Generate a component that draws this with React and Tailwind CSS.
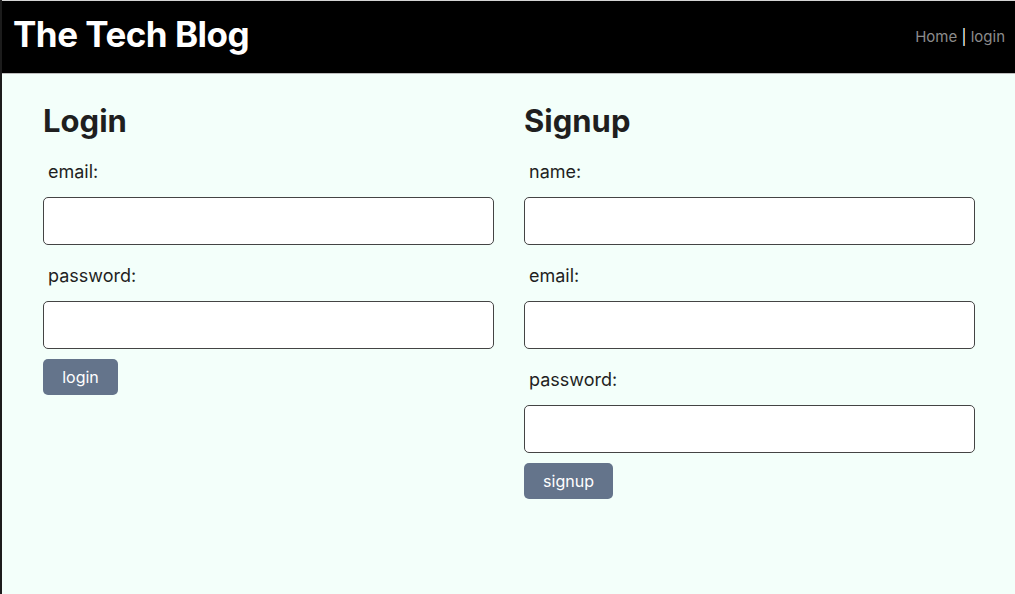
import React from 'react';

const font = { fontFamily: 'Inter, "Liberation Sans", sans-serif' };

const Field = ({ label, type = 'text' }) => (
  <div className="mt-[17px]">
    <label className="block pl-[5px] text-[18px] leading-[28px] text-[#1f1f1f]">{label}</label>
    <input
      type={type}
      className="mt-[11px] block h-[48px] w-full rounded-[5px] border border-[#444] bg-white px-2"
    />
  </div>
);

const App = () => {
  return (
    <div className="min-h-[594px] border-l-2 border-[#1c1c1c] bg-[#f3fffa]" style={font}>
      {/* Header */}
      <header className="flex h-[74px] items-center justify-between border-t border-b border-t-[#d4d4d4] border-b-[#bdbdbd] bg-black pl-[11px] pr-[10px]">
        <h1 className="pb-[5px] text-[35px] font-bold tracking-[-0.5px] text-white">The Tech Blog</h1>
        <nav className="text-[15px] text-[#8c8c8c]">
          <a href="#">Home</a>
          <span className="text-white"> | </span>
          <a href="#">login</a>
        </nav>
      </header>

      {/* Forms */}
      <main className="grid grid-cols-2 gap-[30px] pl-[41px] pr-[40px] pt-[27px]">
        <section>
          <h2 className="text-[31px] font-bold leading-[40px] text-[#1f1f1f]">Login</h2>
          <Field label="email:" type="email" />
          <Field label="password:" type="password" />
          <button className="mt-[10px] h-[36px] w-[75px] rounded-[5px] bg-[#64748b] text-[16px] text-white">
            login
          </button>
        </section>
        <section>
          <h2 className="text-[31px] font-bold leading-[40px] text-[#1f1f1f]">Signup</h2>
          <Field label="name:" />
          <Field label="email:" type="email" />
          <Field label="password:" type="password" />
          <button className="mt-[10px] h-[36px] w-[89px] rounded-[5px] bg-[#64748b] text-[16px] text-white">
            signup
          </button>
        </section>
      </main>
    </div>
  );
};

export default App;
